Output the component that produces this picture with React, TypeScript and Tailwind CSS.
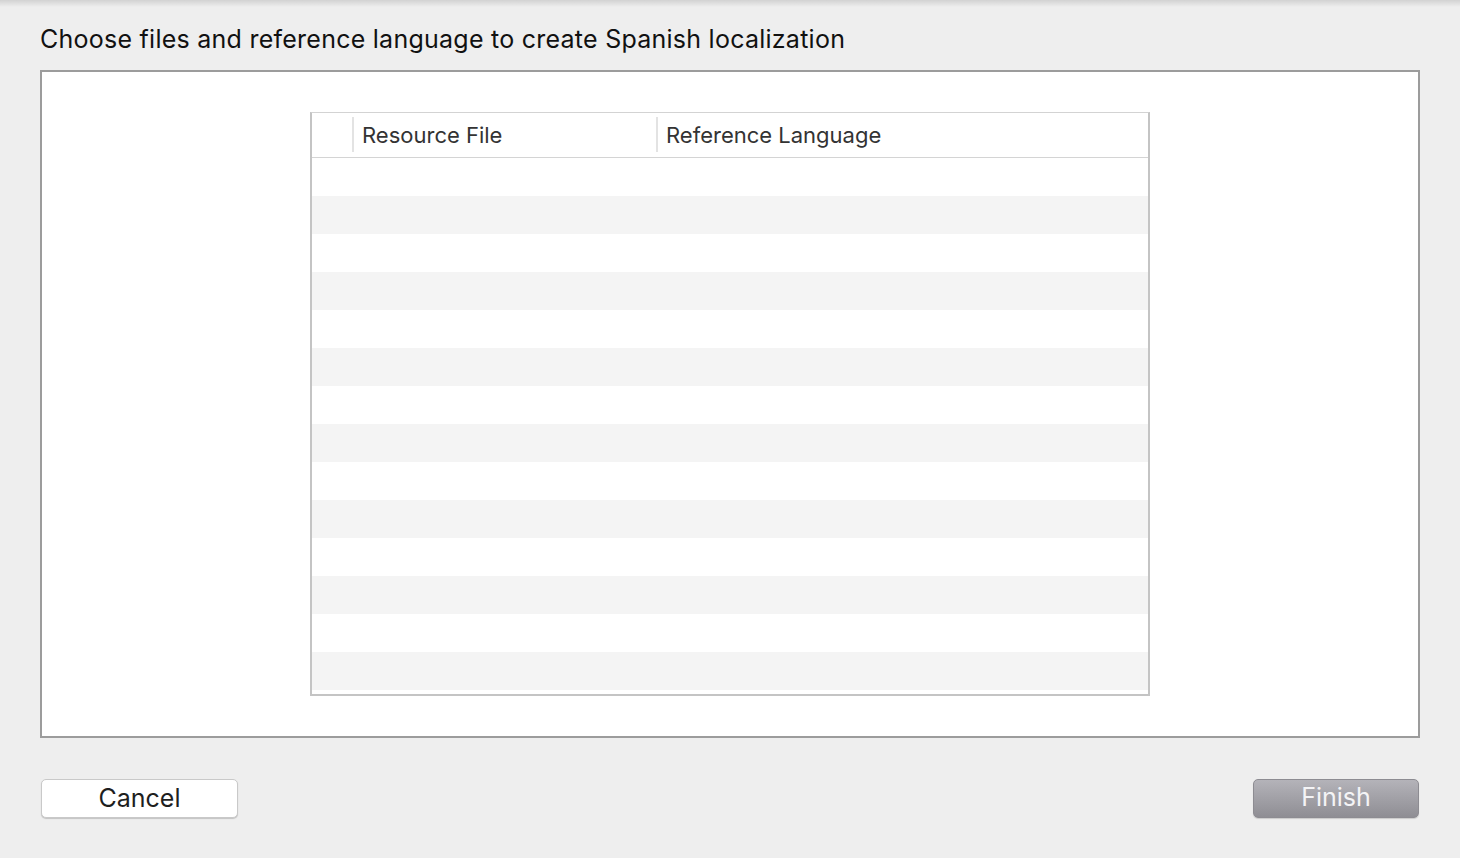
import React from "react";

export default function App() {
  const rows = Array.from({ length: 14 }, (_, i) => i);
  return (
    <div
      className="w-[1460px] h-[858px] bg-[#eeeeee] relative overflow-hidden"
      style={{ fontFamily: "Inter, 'Noto Sans', sans-serif" }}
    >
      <div className="absolute top-0 left-0 right-0 h-[7px] bg-gradient-to-b from-[#d2d2d2] to-[#eeeeee]" />
      <div className="relative flex flex-col pl-[40px] pr-[40px]">
        <div className="h-[70px] flex items-center pt-[8px] text-[25px] text-[#111] tracking-[0.25px] leading-none">
          Choose files and reference language to create Spanish localization
        </div>
        <div className="h-[668px] border-2 border-[#9c9c9c] bg-white flex flex-col items-start pt-[40px] pl-[268px]">
          <div className="w-[840px] h-[584px] bg-white border-x-2 border-b-2 border-t border-x-[#c4c4c4] border-b-[#c4c4c4] border-t-[#d3d3d3] flex flex-col">
            <div className="h-[45px] shrink-0 border-b border-[#d4d4d4] flex items-center relative">
              <div className="absolute left-[40px] top-[4px] w-[2px] h-[35px] bg-[#e3e3e3]" />
              <div className="absolute left-[344px] top-[4px] w-[2px] h-[35px] bg-[#e3e3e3]" />
              <div className="absolute left-[50px] top-0 h-[44px] flex items-center text-[22px] text-[#333] leading-none">
                Resource File
              </div>
              <div className="absolute left-[354px] top-0 h-[44px] flex items-center text-[22px] text-[#333] leading-none">
                Reference Language
              </div>
            </div>
            {rows.map((i) => (
              <div
                key={i}
                className={"h-[38px] shrink-0 " + (i % 2 === 1 ? "bg-[#f4f4f4]" : "bg-white")}
              />
            ))}
          </div>
        </div>
        <div className="flex justify-between items-start pt-[41px] pl-[1px] pr-[1px]">
          <div className="w-[197px] h-[39px] rounded-[5px] bg-white border border-[#c9c9c9] shadow-[0_1px_1px_rgba(0,0,0,0.18)] flex items-center justify-center text-[25px] text-[#1e1e1e] leading-none">
            Cancel
          </div>
          <div className="w-[166px] h-[39px] rounded-[5px] bg-gradient-to-b from-[#b4b3b9] to-[#8f8e94] border border-[#8d8c92] shadow-[0_1px_1px_rgba(0,0,0,0.15)] flex items-center justify-center pb-[2px] text-[25px] text-[#f4f4f6] leading-none">
            Finish
          </div>
        </div>
      </div>
    </div>
  );
}
